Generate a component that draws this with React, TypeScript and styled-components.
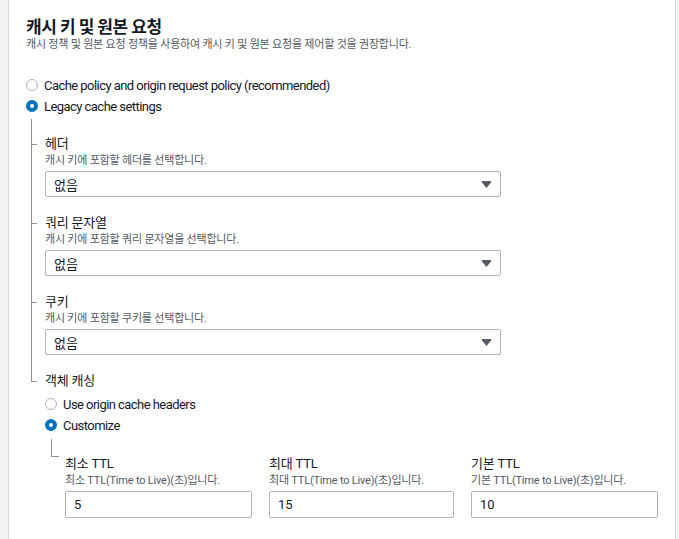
import React from "react";
import styled, { createGlobalStyle } from "styled-components";

const GlobalStyle = createGlobalStyle`
  html, body {
    margin: 0;
    padding: 0;
    background: #f2f3f3;
  }
  body {
    font-family: Roboto, "Noto Sans CJK KR", sans-serif;
    color: #16191f;
  }
  * { box-sizing: border-box; }
`;

const Page = styled.div`
  width: 679px;
  height: 539px;
  overflow: hidden;
  background: #f2f3f3;
`;

const Panel = styled.section`
  margin: 0 3px 0 8px;
  height: 539px;
  background: #ffffff;
  border-left: 1px solid #d5dbdb;
  border-right: 1px solid #d5dbdb;
  padding: 14px 0 0 17px;
`;

const Title = styled.h2`
  margin: 0;
  font-family: "Noto Sans CJK KR", sans-serif;
  font-size: 17px;
  font-weight: 700;
  line-height: 23px;
  letter-spacing: -0.4px;
  color: #16191f;
`;

const Description = styled.p`
  margin: 0;
  font-family: Roboto, "Noto Sans CJK KR", sans-serif;
  font-size: 11px;
  line-height: 16px;
  letter-spacing: -0.2px;
  color: #545b64;
`;

const RadioGroup = styled.div<{ $top: number }>`
  display: flex;
  flex-direction: column;
  gap: 1px;
  margin-top: ${(p) => p.$top}px;
`;

const RadioRow = styled.label`
  display: flex;
  align-items: center;
  gap: 6px;
  height: 20px;
  font-family: Roboto, "Noto Sans CJK KR", sans-serif;
  font-size: 13px;
  letter-spacing: -0.55px;
  color: #16191f;
`;

const RadioDot = styled.span<{ $checked?: boolean }>`
  width: 12px;
  height: 12px;
  border-radius: 50%;
  flex: none;
  background: #ffffff;
  border: ${(p) => (p.$checked ? "4px solid #0073bb" : "1px solid #aab7b8")};
`;

const Tree = styled.div`
  margin: 3px 0 0 5px;
`;

const Branch = styled.div<{ $last?: boolean; $pad: number }>`
  position: relative;
  padding: ${(p) => p.$pad}px 0 0 14px;
  &::before {
    content: "";
    position: absolute;
    left: 0;
    top: 0;
    ${(p) => (p.$last ? `height: ${p.$pad + 9}px;` : "bottom: 0;")}
    border-left: 1px solid #879596;
  }
  &::after {
    content: "";
    position: absolute;
    left: 0;
    top: ${(p) => p.$pad + 9}px;
    width: 6px;
    border-top: 1px solid #879596;
  }
`;

const FieldLabel = styled.div`
  font-family: Roboto, "Noto Sans CJK KR", sans-serif;
  font-size: 13px;
  line-height: 18px;
  letter-spacing: -0.2px;
  color: #16191f;
`;

const SelectBox = styled.div`
  margin-top: 2px;
  width: 456px;
  height: 26px;
  border: 1px solid #aab7b8;
  border-radius: 2px;
  display: flex;
  align-items: center;
  justify-content: space-between;
  padding: 0 9px 0 8px;
  font-size: 13px;
  font-family: "Noto Sans CJK KR", sans-serif;
  color: #16191f;
  background: #fff;
`;

const Caret = () => (
  <svg width="9" height="7" viewBox="0 0 9 7">
    <polygon points="0,0 9,0 9,1.5 4.5,7 0,1.5" fill="#545b64" />
  </svg>
);

const SubTree = styled.div`
  position: relative;
  margin: 4px 0 0 6px;
  padding: 16px 0 0 14px;
  &::before {
    content: "";
    position: absolute;
    left: 0;
    top: 0;
    width: 7px;
    height: 17px;
    border-left: 1px solid #879596;
    border-bottom: 1px solid #879596;
  }
`;

const TTLGrid = styled.div`
  display: grid;
  grid-template-columns: 187px 185px 187px;
  column-gap: 17px;
`;

const TTLField = styled.div`
  display: flex;
  flex-direction: column;
`;

const TextInput = styled.div`
  margin-top: 2px;
  height: 27px;
  border: 1px solid #aab7b8;
  border-radius: 2px;
  display: flex;
  align-items: center;
  padding: 0 8px;
  font-size: 13px;
  color: #16191f;
  background: #fff;
`;

const selects = [
  { label: "헤더", desc: "캐시 키에 포함할 헤더를 선택합니다." },
  { label: "쿼리 문자열", desc: "캐시 키에 포함할 쿼리 문자열을 선택합니다." },
  { label: "쿠키", desc: "캐시 키에 포함할 쿠키를 선택합니다." },
];

const ttls = [
  { label: "최소 TTL", desc: "최소 TTL(Time to Live)(초)입니다.", value: "5" },
  { label: "최대 TTL", desc: "최대 TTL(Time to Live)(초)입니다.", value: "15" },
  { label: "기본 TTL", desc: "기본 TTL(Time to Live)(초)입니다.", value: "10" },
];

export default function App() {
  return (
    <Page>
      <GlobalStyle />
      <Panel>
        <Title>캐시 키 및 원본 요청</Title>
        <Description>
          캐시 정책 및 원본 요청 정책을 사용하여 캐시 키 및 원본 요청을 제어할 것을 권장합니다.
        </Description>
        <RadioGroup $top={22}>
          <RadioRow>
            <RadioDot />
            Cache policy and origin request policy (recommended)
          </RadioRow>
          <RadioRow>
            <RadioDot $checked />
            Legacy cache settings
          </RadioRow>
        </RadioGroup>
        <Tree>
          {selects.map((s, i) => (
            <Branch key={s.label} $pad={i === 0 ? 16 : 17}>
              <FieldLabel>{s.label}</FieldLabel>
              <Description>{s.desc}</Description>
              <SelectBox>
                <span>없음</span>
                <Caret />
              </SelectBox>
            </Branch>
          ))}
          <Branch $last $pad={17}>
            <FieldLabel>객체 캐싱</FieldLabel>
            <RadioGroup $top={4}>
              <RadioRow>
                <RadioDot />
                Use origin cache headers
              </RadioRow>
              <RadioRow>
                <RadioDot $checked />
                Customize
              </RadioRow>
            </RadioGroup>
            <SubTree>
              <TTLGrid>
                {ttls.map((t) => (
                  <TTLField key={t.label}>
                    <FieldLabel>{t.label}</FieldLabel>
                    <Description>{t.desc}</Description>
                    <TextInput>{t.value}</TextInput>
                  </TTLField>
                ))}
              </TTLGrid>
            </SubTree>
          </Branch>
        </Tree>
      </Panel>
    </Page>
  );
}
